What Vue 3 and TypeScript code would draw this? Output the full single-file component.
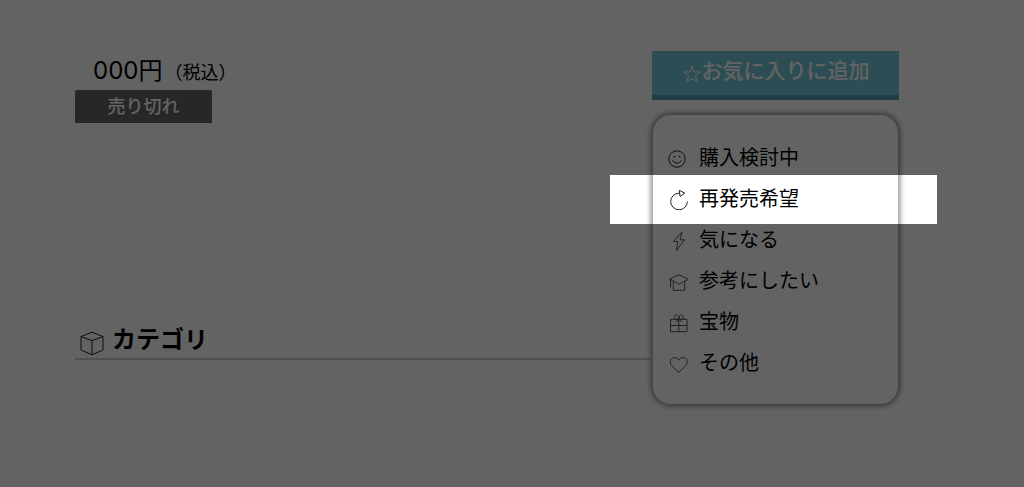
<script setup lang="ts">
interface Reason {
  label: string
  paths: string[]
  active?: boolean
}

const reasons: Reason[] = [
  {
    label: '購入検討中',
    paths: [
      'M10 1.8a8.2 8.2 0 1 0 0 16.4a8.2 8.2 0 0 0 0-16.4z',
      'M5.3 11.5q4.7 5.4 9.4 0',
      'M6.6 7.6h1.6M11.8 7.6h1.6M7.4 6.8v1.6M12.6 6.8v1.6',
    ],
  },
  {
    label: '再発売希望',
    active: true,
    paths: ['M12 3.2A8.3 8.3 0 1 0 20.3 11.5', 'M12.3 0.3l5.5 2.9l-4.8 3.2z'],
  },
  { label: '気になる', paths: ['M15 1l-8.6 9.6h4.4l-1.3 8.8l8-10.6h-4.3z'] },
  {
    label: '参考にしたい',
    paths: ['M2.6 7L12 2.7L21.2 7.3L12 12.2z', 'M6.3 9.5v8.8h11.4v-8.8', 'M3.6 7.6v7.8'],
  },
  {
    label: '宝物',
    paths: [
      'M3.6 6.3h16.4v12.4h-16.4z',
      'M3.6 12.5h16.4M11.8 6.3v12.4',
      'M11.8 5.6C10.5 8 6.8 6.4 7.6 3.4C8.8.4 11.8 2 11.8 5.6C11.8 2 15 .4 16.2 3.4C17 6.4 13 8 11.8 5.6z',
      'M11.8 5.6l-2.4 3.4M11.8 5.6l2.4 3.4',
    ],
  },
  {
    label: 'その他',
    paths: ['M11.8 18.4L4.7 11.6C1.8 8 4 3.6 7.2 3.6C9.5 3.6 11 4.6 11.8 6.2C12.6 4.6 14.1 3.6 16.4 3.6C19.7 3.6 21.8 8 18.9 11.6z'],
  },
]
</script>

<template>
  <main class="page">
    <section class="product">
      <p class="price">000円<span class="tax">（税込）</span></p>
      <button class="sold" type="button" disabled>売り切れ</button>
      <h2 class="category">
        <svg class="cube" viewBox="0 0 24 26" aria-hidden="true">
          <path d="M12 1.2L23 5.6V19L12 23.8L1 19V5.6zM1 5.6L12 9.6L23 5.6M12 9.6V23.8" />
        </svg>
        カテゴリ
      </h2>
    </section>

    <aside class="favorite">
      <button class="add" type="button">
        <svg class="star" viewBox="0 0 20 20" aria-hidden="true">
          <path d="M10 2l2.1 6h6.4l-5.1 3.9l1.9 6.2L10 14.4l-5.3 3.7l1.9-6.2L1.5 8h6.4z" />
        </svg>
        <span>お気に入りに追加</span>
      </button>
      <ul class="menu">
        <li v-for="reason in reasons" :key="reason.label" class="item">
          <button class="reason" type="button">
            <svg class="icon" viewBox="0 0 24 20" aria-hidden="true">
              <path v-for="d in reason.paths" :key="d" :d="d" />
            </svg>
            <span>{{ reason.label }}</span>
          </button>
          <span v-if="reason.active" class="spotlight"></span>
        </li>
      </ul>
    </aside>
  </main>
</template>

<style>
body {
  margin: 0;
  background: #636363;
}
</style>

<style scoped>
.page {
  box-sizing: border-box;
  display: flex;
  align-items: flex-start;
  min-height: 100vh;
  padding: 51px 125px 80px 75px;
  overflow: hidden;
  position: relative;
  background: #fff;
  color: #000;
  font-family: Inter, "Noto Sans CJK JP", sans-serif;
}

button {
  border: 0;
  padding: 0;
  font-family: inherit;
}

.product {
  flex: 1;
}

.price {
  margin: 0;
  padding-left: 18px;
  font-size: 24px;
  line-height: 39px;
}

.tax {
  margin-left: 2px;
  font-size: 18px;
  line-height: 1;
}

.sold {
  display: block;
  width: 137px;
  height: 33px;
  border-radius: 2px 2px 0 0;
  background: #666;
  color: #fff;
  font-size: 18px;
  font-weight: 500;
  line-height: 32px;
}

.category {
  display: flex;
  align-items: center;
  gap: 8px;
  margin: 199px 0 0;
  padding-left: 5px;
  border-bottom: 2px solid #ccc;
  font-size: 24px;
  font-weight: 700;
  line-height: 36px;
}

.cube {
  width: 24px;
  height: 26px;
  margin-top: 8px;
}

svg {
  flex: none;
  fill: none;
  stroke: #222;
  stroke-width: 1;
}

.favorite {
  width: 247px;
  margin-left: 2px;
}

.add {
  display: flex;
  justify-content: center;
  width: 100%;
  height: 49px;
  border-bottom: 5px solid #5b9eb4;
  background: #74c6da;
  color: #fff;
  font-size: 21px;
  font-weight: 500;
  line-height: 40px;
}

.star {
  width: 20px;
  height: 20px;
  margin-top: 13px;
}

.star path {
  stroke: #fff;
}

.menu {
  margin: 15px 1px 0;
  padding: 23px 14px 20px;
  border-radius: 18px;
  background: #fff;
  box-shadow: 0 0 4px 3px rgba(0, 0, 0, 0.35);
  list-style: none;
}

.item {
  position: relative;
}

.reason {
  display: flex;
  align-items: center;
  gap: 8px;
  width: 100%;
  height: 41px;
  background: none;
  color: #000;
  font-size: 20px;
  line-height: 41px;
}

.icon {
  width: 24px;
  height: 20px;
}

.spotlight {
  position: absolute;
  top: -4px;
  right: -53px;
  left: -57px;
  height: 49px;
  box-shadow: 0 0 0 4000px rgba(0, 0, 0, 0.612);
  pointer-events: none;
}
</style>
